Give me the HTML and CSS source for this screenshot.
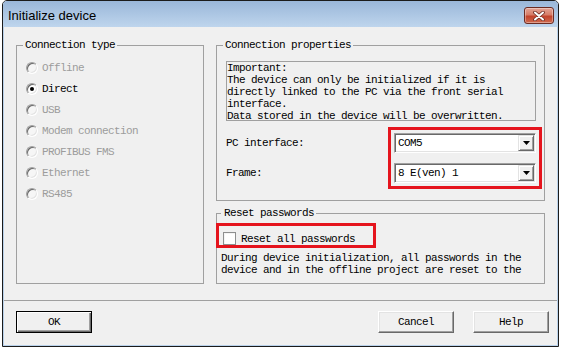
FILE: index.html
```html
<!DOCTYPE html>
<html>
<head>
<meta charset="utf-8">
<link rel="stylesheet" href="styles.css">
</head>
<body>
<div class="window">
  <div class="titlebar">
    <span class="title">Initialize device</span>
    <span class="close">
      <svg width="12" height="10" viewBox="0 0 12 10">
        <path d="M2 1.5 L10 8.5 M10 1.5 L2 8.5" stroke="#6a2c24" stroke-width="3.6" stroke-linecap="round"/>
        <path d="M2 1.5 L10 8.5 M10 1.5 L2 8.5" stroke="#ffffff" stroke-width="2" stroke-linecap="round"/>
      </svg>
    </span>
  </div>
  <div class="client">
    <div class="main">
      <fieldset class="group conn-type">
        <legend>Connection type</legend>
        <div class="radio-list">
          <div class="radio-row disabled"><span class="radio"></span><span>Offline</span></div>
          <div class="radio-row"><span class="radio checked"></span><span>Direct</span></div>
          <div class="radio-row disabled"><span class="radio"></span><span>USB</span></div>
          <div class="radio-row disabled"><span class="radio"></span><span>Modem connection</span></div>
          <div class="radio-row disabled"><span class="radio"></span><span>PROFIBUS FMS</span></div>
          <div class="radio-row disabled"><span class="radio"></span><span>Ethernet</span></div>
          <div class="radio-row disabled"><span class="radio"></span><span>RS485</span></div>
        </div>
      </fieldset>
      <div class="right-col">
        <fieldset class="group props">
          <legend>Connection properties</legend>
          <div class="info">Important:<br>The device can only be initialized if it is<br>directly linked to the PC via the front serial<br>interface.<br>Data stored in the device will be overwritten.</div>
          <div class="prop-area">
            <div class="labels">
              <div class="label">PC interface:</div>
              <div class="label">Frame:</div>
            </div>
            <div class="combos">
              <div class="combo"><span class="combo-text">COM5</span><span class="combo-btn"><svg width="7" height="4" viewBox="0 0 7 4"><path d="M0 0 H7 L3.5 4 Z" fill="#000"/></svg></span></div>
              <div class="combo"><span class="combo-text">8 E(ven) 1</span><span class="combo-btn"><svg width="7" height="4" viewBox="0 0 7 4"><path d="M0 0 H7 L3.5 4 Z" fill="#000"/></svg></span></div>
            </div>
          </div>
        </fieldset>
        <fieldset class="group reset">
          <legend>Reset passwords</legend>
          <div class="check-row"><span class="checkbox"></span><span>Reset all passwords</span></div>
          <div class="desc">During device initialization, all passwords in the<br>device and in the offline project are reset to the</div>
        </fieldset>
      </div>
    </div>
    <div class="sep"></div>
    <div class="buttons">
      <div class="btn default">OK</div>
      <div class="btn cancel">Cancel</div>
      <div class="btn help">Help</div>
    </div>
  </div>
</div>
</body>
</html>
```
FILE: styles.css
```css
html, body {
  margin: 0;
  padding: 0;
  background: #ffffff;
}

.window {
  margin-left: 2px;
  width: 557px;
  height: 347px;
  box-sizing: border-box;
  border: 1px solid #1b1b1b;
  border-radius: 5px 5px 0 0;
  display: flex;
  flex-direction: column;
  overflow: hidden;
}

.titlebar {
  height: 26px;
  flex: none;
  background: linear-gradient(#9ab7d9, #bed5ed);
  display: flex;
  justify-content: space-between;
  align-items: flex-start;
  padding: 0 4px 0 5px;
}

.title {
  font: 13px/16px "Liberation Sans", Arial, sans-serif;
  color: #000;
  margin-top: 7px;
}

.close {
  margin-top: 6px;
  width: 30px;
  height: 17px;
  box-sizing: border-box;
  border: 1px solid #6b2b22;
  border-radius: 3px;
  background: linear-gradient(#e3a496 0%, #d77d68 45%, #c2432c 55%, #cf6a4f 100%);
  display: flex;
  align-items: center;
  justify-content: center;
  box-shadow: inset 0 0 0 1px rgba(255, 255, 255, 0.35);
}

.client {
  flex: 1;
  background: #f0f0f0;
  border: 1px solid #b9d1ea;
  border-top: none;
  display: flex;
  flex-direction: column;
  font: 11px/12px "Liberation Mono", monospace;
  letter-spacing: -0.6px;
  color: #000;
}

.main {
  display: flex;
  gap: 12px;
  padding: 12px 12px 0 12px;
}

.group {
  margin: 0;
  min-width: 0;
  border: 1px solid #a0a0a0;
}

.group legend {
  padding: 0 2px;
  line-height: 12px;
}

.conn-type {
  width: 188px;
  box-sizing: border-box;
  padding: 6px 6px 0 6px;
}

.radio-list {
  margin-left: 3px;
}

.radio-row {
  height: 21px;
  display: flex;
  align-items: center;
  gap: 4px;
}

.radio-row.disabled {
  color: #9c9c9c;
}

.radio {
  width: 12px;
  height: 12px;
  box-sizing: border-box;
  border-radius: 50%;
  border: 1px solid;
  border-color: #a0a0a0 #ffffff #ffffff #a0a0a0;
  box-shadow: inset 1px 1px 0 #696969, inset -1px -1px 0 #e3e3e3;
  background: #ffffff;
  display: flex;
  align-items: center;
  justify-content: center;
}

.radio-row.disabled .radio {
  background: #f6f6f6;
}

.radio.checked::after {
  content: "";
  width: 4px;
  height: 4px;
  border-radius: 50%;
  background: #000;
}

.right-col {
  flex: 1;
  display: flex;
  flex-direction: column;
  gap: 6px;
}

.props {
  padding: 10px 8px 17px 6px;
}

.info {
  margin-left: 3px;
  height: 60px;
  box-sizing: border-box;
  border: 1px solid #a0a0a0;
  overflow: hidden;
  white-space: nowrap;
  line-height: 12px;
}

.prop-area {
  margin-top: 12px;
  display: flex;
  justify-content: space-between;
}

.labels {
  display: flex;
  flex-direction: column;
  gap: 10px;
  margin-left: 3px;
}

.label {
  height: 20px;
  line-height: 20px;
}

.combos {
  width: 142px;
  display: flex;
  flex-direction: column;
  gap: 10px;
  outline: 3px solid #e5141d;
  outline-offset: 3px;
}

.combo {
  height: 20px;
  box-sizing: border-box;
  border: 1px solid;
  border-color: #a0a0a0 #ffffff #ffffff #a0a0a0;
  box-shadow: inset 1px 1px 0 #696969, inset -1px -1px 0 #e3e3e3;
  background: #ffffff;
  display: flex;
  align-items: center;
  padding: 1px;
}

.combo-text {
  flex: 1;
  padding-left: 2px;
}

.combo-btn {
  width: 16px;
  height: 16px;
  box-sizing: border-box;
  border: 1px solid;
  border-color: #e3e3e3 #696969 #696969 #e3e3e3;
  box-shadow: inset 1px 1px 0 #ffffff, inset -1px -1px 0 #a0a0a0;
  background: #f0f0f0;
  display: flex;
  align-items: center;
  justify-content: center;
}

.reset {
  padding: 13px 6px 7px 4px;
}

.reset legend {
  padding: 0 2px 0 3px;
}

.check-row {
  position: relative;
  width: max-content;
  height: 13px;
  margin-left: 2px;
  display: flex;
  align-items: center;
  gap: 5px;
}

.check-row::after {
  content: "";
  position: absolute;
  top: -9px;
  bottom: -3px;
  left: -7px;
  right: -21px;
  border: 3px solid #e5141d;
}

.checkbox {
  width: 13px;
  height: 13px;
  box-sizing: border-box;
  border: 1px solid #8e8f8f;
  box-shadow: inset 1px 1px 0 #f4f4f4;
  background: #ffffff;
}

.desc {
  margin-top: 7px;
  white-space: nowrap;
  line-height: 12px;
}

.sep {
  margin-top: 16px;
  border-top: 1px solid #a0a0a0;
}

.buttons {
  display: flex;
  padding: 10px 8px 0 12px;
}

.btn {
  width: 76px;
  height: 22px;
  box-sizing: border-box;
  border: 1px solid;
  border-color: #ffffff #696969 #696969 #ffffff;
  box-shadow: inset -1px -1px 0 #a0a0a0, inset 1px 1px 0 #e3e3e3;
  background: #f0f0f0;
  display: flex;
  align-items: center;
  justify-content: center;
}

.btn.default {
  border-color: #000;
  box-shadow: inset 1px 1px 0 #ffffff, inset -1px -1px 0 #696969, inset -2px -2px 0 #a0a0a0;
}

.btn.cancel {
  margin-left: auto;
}

.btn.help {
  margin-left: 19px;
}
```
